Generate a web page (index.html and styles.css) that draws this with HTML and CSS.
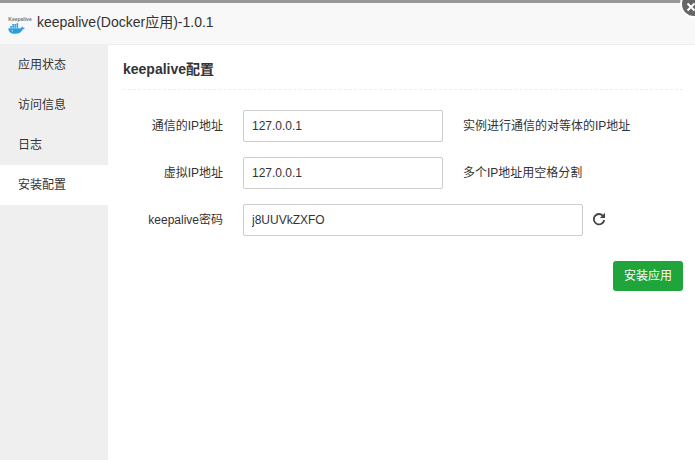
FILE: index.html
```html
<!DOCTYPE html>
<html lang="zh-CN">
<head>
<meta charset="utf-8">
<title>keepalive</title>
<link rel="stylesheet" href="styles.css">
</head>
<body>
<div class="dialog">
  <header class="title-bar">
    <div class="logo">
      <span class="logo-text">Keepalive</span>
      <svg class="whale" viewBox="0 0 24 15" width="17" height="11" aria-hidden="true">
        <path fill="#2b9fdc" d="M0.5 7h18c.4-1.500 1.200-2.300 2-2.500.5.800.8 1.300.8 2 .8-.2 1.700-.1 2.500.4-.6 1.300-1.700 1.900-3.200 1.900C19 12.500 15.500 15 10 15 3.500 15 .5 11.500.5 7z"/>
        <path fill="#2b9fdc" d="M3 4h2.400v2.400H3zM6 4h2.400v2.400H6zM9 4h2.400v2.400H9zM12 4h2.400v2.400H12zM6 1.200h2.400v2.400H6zM9 1.200h2.400v2.400H9zM12 1.200h2.400v2.400H12zM12-1h2.400v1.800H12z"/>
        <circle cx="6" cy="10.500" r=".8" fill="#fff"/>
      </svg>
    </div>
    <h1 class="title">keepalive(Docker应用)-1.0.1</h1>
  </header>
  <span class="close" aria-label="关闭"><svg viewBox="0 0 10 10" width="10" height="10"><path d="M1.500 1.500l7 7M8.500 1.500l-7 7" stroke="#fff" stroke-width="2"/></svg></span>
  <div class="body">
    <nav class="side">
      <a class="side-item">应用状态</a>
      <a class="side-item">访问信息</a>
      <a class="side-item">日志</a>
      <a class="side-item active">安装配置</a>
    </nav>
    <main class="content">
      <h2 class="section-title">keepalive配置</h2>
      <form class="form">
        <div class="row">
          <label class="label">通信的IP地址</label>
          <input class="input" type="text" value="127.0.0.1">
          <span class="help">实例进行通信的对等体的IP地址</span>
        </div>
        <div class="row">
          <label class="label">虚拟IP地址</label>
          <input class="input" type="text" value="127.0.0.1">
          <span class="help">多个IP地址用空格分割</span>
        </div>
        <div class="row">
          <label class="label">keepalive密码</label>
          <input class="input wide" type="text" value="j8UUVkZXFO">
          <svg class="refresh" viewBox="0 0 14 14" width="14" height="14" aria-hidden="true">
            <path fill="none" stroke="#444" stroke-width="1.800" d="M11.300 4.200A5.200 5.200 0 1 0 12.200 8"/>
            <path fill="#444" d="M13 .8v5.100H7.900z"/>
          </svg>
        </div>
        <div class="actions">
          <button class="submit" type="button">安装应用</button>
        </div>
      </form>
    </main>
  </div>
</div>
</body>
</html>
```
FILE: styles.css
```css
* { box-sizing: border-box; }
html, body { margin: 0; height: 100%; overflow: hidden; }
body {
  background: #fff;
  color: #333;
  font-family: "Liberation Sans", "Noto Sans CJK SC", sans-serif;
  font-size: 12px;
}
.dialog {
  position: relative;
  display: flex;
  flex-direction: column;
  height: 460px;
  border-top: 3px solid #999;
}
.title-bar {
  display: flex;
  align-items: flex-start;
  height: 42px;
  padding-left: 8px;
  background: #f8f8f8;
  border-bottom: 1px solid #eee;
}
.logo {
  display: flex;
  flex-direction: column;
  align-items: center;
  width: 24px;
  margin-right: 5px;
  padding-top: 13px;
}
.logo-text {
  font-size: 5px;
  line-height: 6px;
  font-weight: bold;
  color: #777;
  white-space: nowrap;
}
.whale { display: block; margin: 1px 7px 0 0; }
.title {
  margin: 0;
  font-size: 14px;
  font-weight: normal;
  line-height: 38px;
  color: #333;
}
.close {
  position: absolute;
  top: -11px;
  right: -11px;
  display: flex;
  align-items: center;
  justify-content: center;
  width: 24px;
  height: 24px;
  padding: 6px 6px 0 0;
  border-radius: 50%;
  background: #666;
  box-shadow: 0 0 0 2px #fff;
}
.body { flex: 1; display: flex; min-height: 0; }
.side {
  width: 108px;
  background: #efefef;
  display: flex;
  flex-direction: column;
}
.side-item {
  display: block;
  height: 40px;
  line-height: 40px;
  padding-left: 18px;
  color: #333;
}
.side-item.active { background: #fff; }
.content { flex: 1; padding: 0 12px 0 15px; }
.section-title {
  margin: 0;
  height: 45px;
  line-height: 49px;
  font-size: 14px;
  font-weight: bold;
  color: #333;
  border-bottom: 1px dashed #eee;
}
.form { padding-top: 20px; }
.row {
  display: flex;
  align-items: flex-start;
  height: 32px;
  margin-bottom: 15px;
}
.label {
  width: 100px;
  padding-top: 1px;
  line-height: 30px;
  text-align: right;
  color: #333;
}
.input {
  width: 200px;
  height: 32px;
  margin: 0 0 0 20px;
  padding: 0 8px;
  border: 1px solid #ccc;
  border-radius: 2px;
  background: #fff;
  color: #333;
  font: inherit;
}
.input.wide { width: 340px; }
.help { margin-left: 20px; padding-top: 1px; line-height: 30px; color: #333; }
.refresh { margin: 8px 0 0 9px; }
.actions {
  display: flex;
  justify-content: flex-end;
  padding-top: 10px;
}
.submit {
  width: 70px;
  height: 30px;
  padding: 0 0 3px;
  border: 0;
  border-radius: 3px;
  background: #20a53a;
  color: #fff;
  font: inherit;
}
```
